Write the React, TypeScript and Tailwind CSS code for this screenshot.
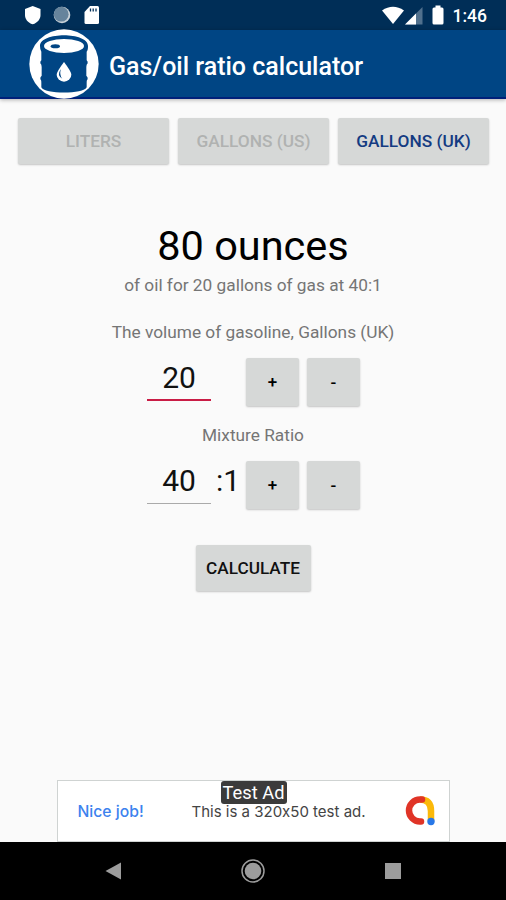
import type { ReactNode } from "react";

const units = [
    { value: "LITERS", label: "LITERS" },
    { value: "GALLONS_US", label: "GALLONS (US)" },
    { value: "GALLONS_UK", label: "GALLONS (UK)" },
];

const buttonBase =
    "flex items-center justify-center rounded-[2px] bg-[#d6d8d7] pt-[2px] font-medium shadow-[0_1px_2px_rgba(0,0,0,0.22)]";

function StatusBar() {
    return (
        <div className="flex h-[30px] items-center bg-[#002e57] text-white">
            <svg className="ml-[24px] h-[20px] w-[17px]" viewBox="0 0 17 20">
                <path d="M8.7 1 L16.5 4 V10 C16.5 14 13.5 18 8.7 19.3 C3.8 18 1 14 1 10 V4 Z" fill="#fff" />
            </svg>
            <svg className="ml-[12px] h-[18px] w-[18px]" viewBox="0 0 18 18">
                <circle cx="9" cy="9" r="8.3" fill="#c9d2d8" />
                <circle cx="8.2" cy="8.2" r="7.4" fill="#66849c" />
            </svg>
            <svg className="ml-[13px] h-[20px] w-[16px]" viewBox="0 0 16 20">
                <path d="M6 1 H13.5 Q15 1 15 2.5 V17.5 Q15 19 13.5 19 H2 Q.5 19 .5 17.5 V7 Z" fill="#fff" />
                <path d="M6.5 3.5 v3 M9.2 3.5 v3 M12 3.5 v3" stroke="#002e57" strokeWidth="1.3" />
            </svg>
            <svg className="ml-auto h-[20px] w-[24px]" viewBox="0 0 24 20">
                <path d="M1 5.5 Q12 -2 23 5.5 L12 19 Z" fill="#fff" />
            </svg>
            <svg className="h-[20px] w-[18px]" viewBox="0 0 18 20">
                <path d="M17.5 2 V19.5 H0 Z" fill="#50708d" />
                <path d="M11 8.5 V19.5 H0 Z" fill="#fff" />
            </svg>
            <svg className="ml-[9px] h-[20px] w-[12px]" viewBox="0 0 12 20">
                <path d="M3.5 .5 h5 v2 H10 Q11.5 2.5 11.5 4 V18 Q11.5 19.5 10 19.5 H2 Q.5 19.5 .5 18 V4 Q.5 2.5 2 2.5 H3.5 Z" fill="#fff" />
            </svg>
            <span className="mr-[19px] ml-[9px] pt-[4px] text-[17.5px] leading-none font-medium">1:46</span>
        </div>
    );
}

function BarrelLogo() {
    return (
        <svg className="relative z-10 ml-[29px] h-[70px] w-[70px] shrink-0" viewBox="88 88 210 210">
            <circle cx="193" cy="193" r="104" fill="#fff" />
            <path
                d="M121 139 C121 96 265 96 265 139 C265 148 264 152 261 156 V182 Q265 185 264 191 Q260 195 260 202 V228 Q265 232 264 238 Q260 242 261 250 V263 C254 284 132 284 125 263 V250 Q126 242 122 238 Q121 232 126 228 V202 Q126 195 122 191 Q121 185 125 182 V156 Q121 150 121 139 Z"
                fill="#004584"
            />
            <ellipse cx="193" cy="139" rx="60" ry="21" fill="#fff" />
            <ellipse cx="167" cy="140" rx="14" ry="6" fill="#004584" />
            <path d="M193 187 Q215 216 215 225 A22 21 0 0 1 171 225 Q171 216 193 187 Z" fill="#fff" />
            <path d="M184 208 Q170 227 188 237 Q178 225 184 208 Z" fill="#004584" />
        </svg>
    );
}

function StepButton({ children }: { children: ReactNode }) {
    return <button className={`${buttonBase} h-[48px] w-[53px] text-[17px] text-black`}>{children}</button>;
}

function NumberField({ value, focused, suffix }: { value: string; focused?: boolean; suffix?: string }) {
    return (
        <div className="flex h-[48px] justify-center pl-px">
            <div
                className={`h-[43px] w-[64px] text-center text-[30px] leading-[39px] ${
                    focused ? "border-b-2 border-[#c91c45]" : "border-b border-[#aaa]"
                }`}
            >
                {value}
            </div>
            <div className="w-[35px] pl-[5px] text-[30px] leading-[39px]">{suffix}</div>
            <div className="flex gap-[8px]">
                <StepButton>+</StepButton>
                <StepButton>-</StepButton>
            </div>
        </div>
    );
}

function TestAd() {
    return (
        <div className="relative mx-auto flex h-[62px] w-[393px] items-center border border-[#cfd3d2] bg-white font-[Inter] [font-feature-settings:'calt'_0]">
            <span className="ml-[20px] w-[114px] pt-[2px] text-[15.7px] font-medium text-[#3c82ee]">Nice job!</span>
            <span className="pt-[2px] text-[15px] whitespace-nowrap text-[#444]">This is a 320x50 test ad.</span>
            <svg className="absolute top-[14px] left-[346px] h-[32px] w-[32px]" viewBox="0 0 32 32" fill="none">
                <path d="M16 4.5 Q27 4.5 27 16 V26" stroke="#fbb90a" strokeWidth="6.5" />
                <path d="M18 4.5 H16 A11 11 0 0 0 16 26.5 H17" stroke="#e03427" strokeWidth="6.5" strokeLinecap="round" />
                <circle cx="27" cy="26.5" r="3.7" fill="#2878e8" />
            </svg>
            <span className="absolute top-0 left-[163px] flex h-[23px] w-[66px] items-center justify-center rounded-[3px] bg-[#3b3b3b] pt-[2px] font-[Roboto] text-[18.3px] leading-none whitespace-nowrap text-white">
                Test Ad
            </span>
        </div>
    );
}

export default function App() {
    const activeUnit = "GALLONS_UK";

    return (
        <div className="flex h-[900px] w-[506px] flex-col overflow-hidden bg-[#fafafa] font-[Roboto,sans-serif] text-[#111]">
            <StatusBar />
            <header className="flex h-[69px] items-center border-b-2 border-[#00207a] bg-[#004584] shadow-[0_1px_4px_rgba(0,0,0,0.3)]">
                <BarrelLogo />
                <h1 className="ml-[10px] pt-[5px] text-[25px] leading-none font-medium text-white">
                    Gas/oil ratio calculator
                </h1>
            </header>

            <div className="mt-[19px] flex justify-between pr-[17px] pl-[18px]">
                {units.map((unit) => (
                    <button
                        key={unit.value}
                        className={`${buttonBase} h-[46px] w-[151px] text-[17.3px] ${
                            unit.value === activeUnit ? "text-[#143b82]" : "text-[#b0b2b1]"
                        }`}
                    >
                        {unit.label}
                    </button>
                ))}
            </div>

            <main className="flex flex-col items-center">
                <p className="mt-[57px] text-[41.5px] leading-[50px] text-black">80 ounces</p>
                <p className="mt-[4px] text-[17.3px] leading-[20px] text-[#757575]">
                    of oil for 20 gallons of gas at 40:1
                </p>
                <p className="mt-[27px] mb-[16px] text-[17.3px] leading-[20px] text-[#757575]">
                    The volume of gasoline, Gallons (UK)
                </p>
                <NumberField value="20" focused />
                <p className="mt-[19px] mb-[16px] text-[17.3px] leading-[20px] text-[#757575]">Mixture Ratio</p>
                <NumberField value="40" suffix=":1" />
                <button className={`${buttonBase} mt-[36px] h-[46px] w-[115px] text-[17.2px]`}>CALCULATE</button>
            </main>

            <div className="mt-auto">
                <TestAd />
                <nav className="flex h-[58px] items-center bg-black">
                    <svg className="ml-[105px] h-[18px] w-[17px]" viewBox="0 0 17 18">
                        <path d="M.5 9 L16 .5 V17.5 Z" fill="#9c9c9c" />
                    </svg>
                    <svg className="ml-[119px] h-[24px] w-[24px]" viewBox="0 0 24 24">
                        <circle cx="12" cy="12" r="11" fill="none" stroke="#9c9c9c" strokeWidth="1.5" />
                        <circle cx="12" cy="12" r="8.3" fill="#9c9c9c" />
                    </svg>
                    <div className="ml-[120px] h-[16px] w-[16px] bg-[#9c9c9c]" />
                </nav>
            </div>
        </div>
    );
}
